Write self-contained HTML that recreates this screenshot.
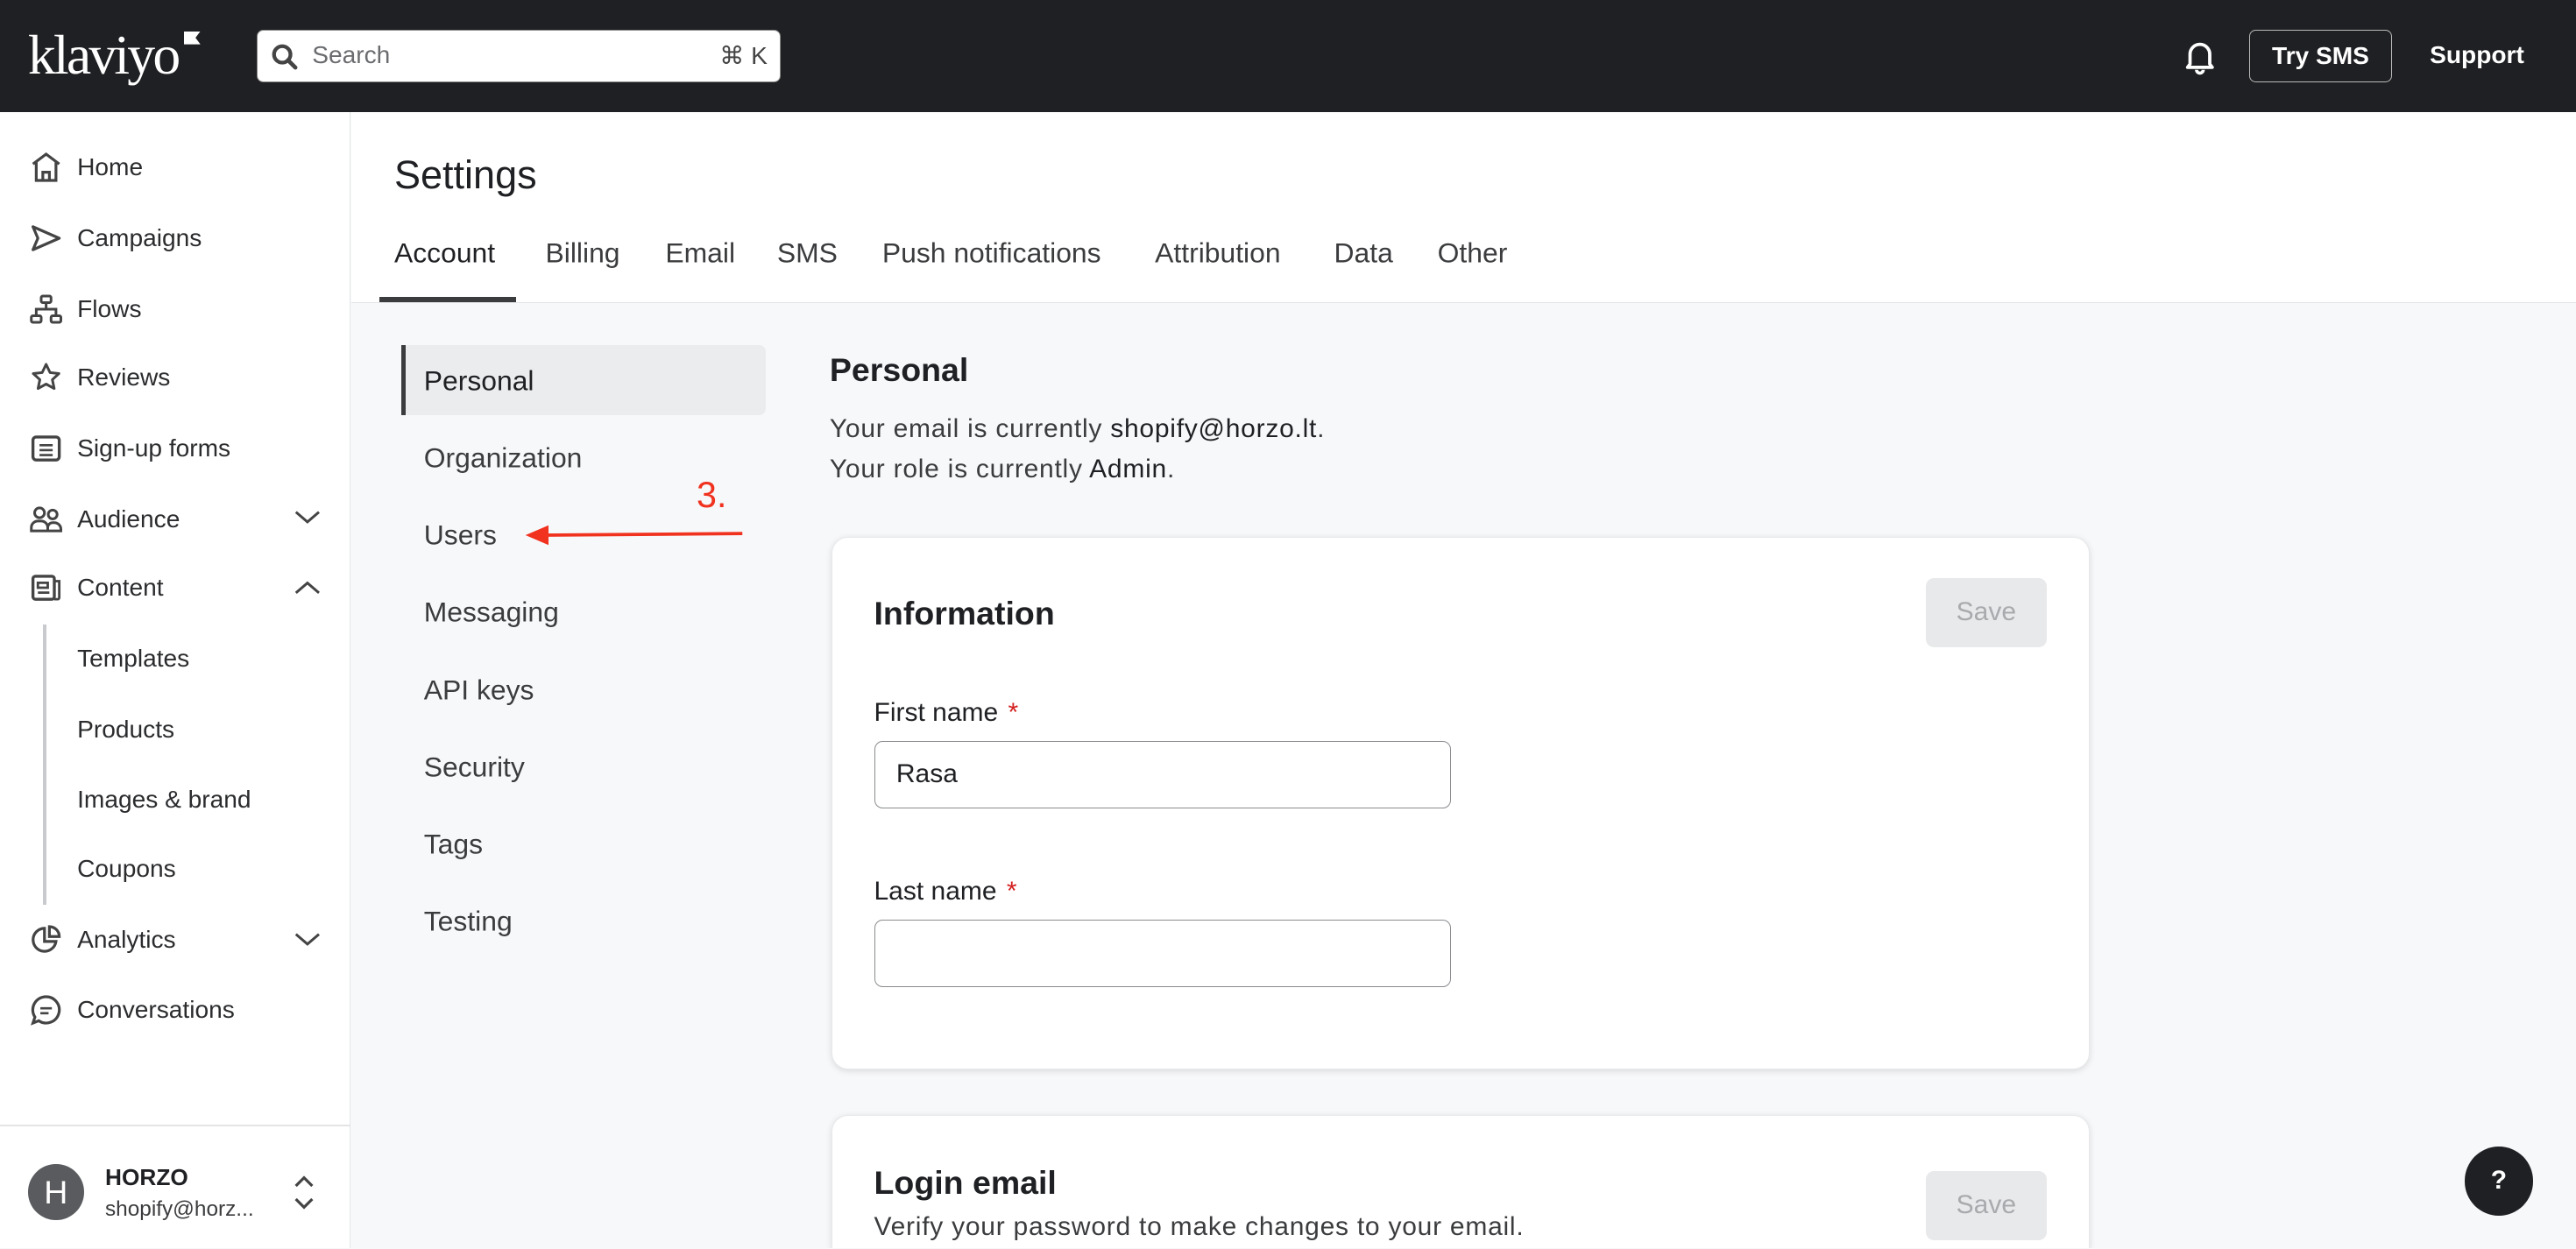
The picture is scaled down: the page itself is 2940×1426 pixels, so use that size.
<!DOCTYPE html>
<html><head><meta charset="utf-8"><style>
html,body{margin:0;padding:0;width:2940px;height:1426px;overflow:hidden;background:#f7f8fa}
#r{zoom:1.875;position:relative;width:1568px;height:760px;overflow:hidden;font-family:"Liberation Sans",sans-serif;color:#1f2023;background:#f7f8fa}
.a{position:absolute}
.hd{left:0;top:0;width:1568px;height:68px;background:#1f2023}
.sb{left:0;top:68px;width:213px;height:692px;background:#fff;border-right:1px solid #e3e4e6}
.ni{position:absolute;left:47px;font-size:15px;color:#2b2c2e;transform:translateY(-50%)}
.ic{position:absolute;left:17px;width:22px;height:22px;transform:translateY(-50%)}
.sub{position:absolute;left:258px;font-size:17px;color:#3b3c3e;transform:translateY(-50%)}
.tab{position:absolute;top:154px;font-size:17px;color:#3b3c3e;transform:translateY(-50%)}
.card{background:#fff;border-radius:10px;box-shadow:0 1px 4px rgba(0,0,0,.12);border:1px solid #e8e9eb}
.save{background:#e8e9eb;color:#a9aaad;border-radius:5px;font-size:16px;display:flex;align-items:center;justify-content:center}
.inp{border:1px solid #8a8b8e;border-radius:5px;background:#fff;font-size:16px;box-sizing:border-box;padding-left:13px;display:flex;align-items:center}
.lbl{font-size:16px;color:#1f2023;transform:translateY(-50%)}
.req{color:#d42020;margin-left:6px}
.p{font-size:16px;color:#3b3c3e;letter-spacing:.4px}
</style></head><body><div id="r">
<div class="a hd"></div>
<div class="a" style="left:17px;top:14px;font-family:'Liberation Serif',serif;font-size:34px;color:#fff;letter-spacing:-1.5px">klaviyo</div>
<div class="a" style="left:112px;top:19px;width:10px;height:8px;background:#fff;clip-path:polygon(0 0,100% 0,70% 50%,100% 100%,0 100%)"></div>
<div class="a" style="left:156px;top:18px;width:319px;height:32px;background:#fff;border-radius:4px;border:1px solid #888;box-sizing:border-box"></div>
<svg class="a" style="left:165px;top:26px" width="17" height="17" viewBox="0 0 17 17"><circle cx="7" cy="7" r="5" fill="none" stroke="#444" stroke-width="2.3"/><path d="M10.5 10.5 15 15" stroke="#444" stroke-width="2.5" stroke-linecap="round"/></svg>
<div class="a" style="left:190px;top:25px;font-size:15px;color:#6b6c6f">Search</div>
<div class="a" style="left:438px;top:25px;font-size:15px;color:#444">⌘ K</div>
<svg class="a" style="left:1329px;top:24px" width="20" height="22" viewBox="0 0 20 22"><path d="M4 15V9a6 6 0 0 1 12 0v6l1.5 2h-15z" fill="none" stroke="#fff" stroke-width="2" stroke-linejoin="round"/><path d="M8 18.5a2 2 0 0 0 4 0" fill="none" stroke="#fff" stroke-width="2"/></svg>
<div class="a" style="left:1369px;top:18px;width:87px;height:32px;border:1px solid #bbb;border-radius:4px;box-sizing:border-box;color:#fff;font-size:15px;font-weight:bold;display:flex;align-items:center;justify-content:center">Try SMS</div>
<div class="a" style="left:1479px;top:25px;color:#fff;font-size:15px;font-weight:bold">Support</div>

<div class="a sb"></div>
<svg class="ic" style="top:102px" viewBox="0 0 22 22" fill="none" stroke="#444" stroke-width="1.7"><path d="M3 9 11 3l8 6M5 8v11h12V8M9 19v-5h4v5"/></svg>
<div class="ni" style="top:102px">Home</div>
<svg class="ic" style="top:145px" viewBox="0 0 22 22" fill="none" stroke="#444" stroke-width="1.7" stroke-linejoin="round"><path d="M3 4l16 7-16 7 3-7z"/></svg>
<div class="ni" style="top:145px">Campaigns</div>
<svg class="ic" style="top:188px" viewBox="0 0 22 22" fill="none" stroke="#444" stroke-width="1.6"><rect x="8" y="3" width="6" height="4" rx="1"/><rect x="2" y="15" width="6" height="4" rx="1"/><rect x="14" y="15" width="6" height="4" rx="1"/><path d="M11 7v4M5 15v-4h12v4"/></svg>
<div class="ni" style="top:188px">Flows</div>
<svg class="ic" style="top:230px" viewBox="0 0 22 22" fill="none" stroke="#444" stroke-width="1.6" stroke-linejoin="round"><path d="M11 3l2.4 5 5.4.6-4 3.7 1.1 5.4L11 15l-4.9 2.7 1.1-5.4-4-3.7 5.4-.6z"/></svg>
<div class="ni" style="top:230px">Reviews</div>
<svg class="ic" style="top:273px" viewBox="0 0 22 22" fill="none" stroke="#444" stroke-width="1.8"><rect x="3" y="4" width="16" height="14" rx="2"/><path d="M7 9h8M7 12h8M7 15h8" stroke-width="1.4"/></svg>
<div class="ni" style="top:273px">Sign-up forms</div>
<svg class="ic" style="top:316px" viewBox="0 0 22 22" fill="none" stroke="#444" stroke-width="1.6"><circle cx="7" cy="7" r="3"/><circle cx="15" cy="8" r="2.7"/><path d="M2 18v-2a4 4 0 0 1 4-4h2a4 4 0 0 1 4 4v2zM12 18v-2a3 3 0 0 1 3-3h1a4 4 0 0 1 4 4v1z"/></svg>
<div class="ni" style="top:316px">Audience</div>
<svg class="ic" style="top:358px" viewBox="0 0 22 22" fill="none" stroke="#444" stroke-width="1.8"><rect x="3" y="4" width="13" height="14" rx="1.5"/><path d="M16 7h3v10a1 1 0 0 1-1 1h-2M6 8h6v3H6zM6 14h7" stroke-width="1.5"/></svg>
<div class="ni" style="top:358px">Content</div>
<svg class="a" style="left:178px;top:309px" width="18" height="12" viewBox="0 0 18 12"><path d="M2 3l7 6 7-6" fill="none" stroke="#444" stroke-width="1.6"/></svg>
<svg class="a" style="left:178px;top:352px" width="18" height="12" viewBox="0 0 18 12"><path d="M2 9l7-6 7 6" fill="none" stroke="#444" stroke-width="1.6"/></svg>
<div class="a" style="left:26px;top:380px;width:2px;height:171px;background:#c9cacd"></div>
<div class="ni" style="top:401px">Templates</div>
<div class="ni" style="top:444px">Products</div>
<div class="ni" style="top:487px">Images &amp; brand</div>
<div class="ni" style="top:529px">Coupons</div>
<svg class="ic" style="top:572px" viewBox="0 0 22 22" fill="none" stroke="#444" stroke-width="1.7"><path d="M10 4a7 7 0 1 0 7 8h-7z"/><path d="M13 3a6 6 0 0 1 6 6h-6z"/></svg>
<div class="ni" style="top:572px">Analytics</div>
<svg class="a" style="left:178px;top:566px" width="18" height="12" viewBox="0 0 18 12"><path d="M2 3l7 6 7-6" fill="none" stroke="#444" stroke-width="1.6"/></svg>
<svg class="ic" style="top:615px" viewBox="0 0 22 22" fill="none" stroke="#444" stroke-width="1.7"><path d="M11 3a8 8 0 1 1-4.5 14.6L3 19l1.2-3.6A8 8 0 0 1 11 3z"/><path d="M7.5 10h7M7.5 13h5" stroke-width="1.4"/></svg>
<div class="ni" style="top:615px">Conversations</div>
<div class="a" style="left:0;top:685px;width:213px;height:1px;background:#e3e4e6"></div>
<div class="a" style="left:17px;top:709px;width:34px;height:34px;border-radius:50%;background:#5a5b5e;color:#fff;font-size:20px;display:flex;align-items:center;justify-content:center">H</div>
<div class="a" style="left:64px;top:709px;font-size:14px;font-weight:bold">HORZO</div>
<div class="a" style="left:64px;top:729px;font-size:13px;color:#3b3c3e">shopify@horz...</div>
<svg class="a" style="left:177px;top:714px" width="16" height="24" viewBox="0 0 16 24"><path d="M3 8l5-5 5 5M3 16l5 5 5-5" fill="none" stroke="#444" stroke-width="1.7"/></svg>

<div class="a" style="left:214px;top:68px;width:1354px;height:116px;background:#fff;border-bottom:1px solid #e3e4e6"></div>
<div class="a" style="left:240px;top:93px;font-size:24px">Settings</div>
<div class="tab" style="left:240px;color:#1f2023">Account</div>
<div class="tab" style="left:332px">Billing</div>
<div class="tab" style="left:405px">Email</div>
<div class="tab" style="left:473px">SMS</div>
<div class="tab" style="left:537px">Push notifications</div>
<div class="tab" style="left:703px">Attribution</div>
<div class="tab" style="left:812px">Data</div>
<div class="tab" style="left:875px">Other</div>
<div class="a" style="left:231px;top:181px;width:83px;height:3px;background:#3b3c3e"></div>

<div class="a" style="left:245px;top:210px;width:221px;height:43px;background:#ebecee;border-radius:4px"></div>
<div class="a" style="left:244px;top:210px;width:3px;height:43px;background:#3b3c3e"></div>
<div class="sub" style="top:232px;color:#1f2023">Personal</div>
<div class="sub" style="top:279px">Organization</div>
<div class="sub" style="top:326px">Users</div>
<div class="sub" style="top:373px">Messaging</div>
<div class="sub" style="top:420px">API keys</div>
<div class="sub" style="top:467px">Security</div>
<div class="sub" style="top:514px">Tags</div>
<div class="sub" style="top:561px">Testing</div>
<div class="a" style="left:424px;top:289px;font-size:22px;color:#f0321e">3.</div>
<svg class="a" style="left:318px;top:318px" width="136" height="16" viewBox="0 0 136 16"><path d="M134 7L12 8" stroke="#f0321e" stroke-width="2"/><path d="M2 8l14-6v12z" fill="#f0321e"/></svg>

<div class="a" style="left:505px;top:214px;font-size:20px;font-weight:600;color:#1f2023">Personal</div>
<div class="a p" style="left:505px;top:252px">Your email is currently <span style="color:#1f2023">shopify@horzo.lt</span>.</div>
<div class="a p" style="left:505px;top:277px">Your role is currently <span style="color:#1f2023">Admin</span>.</div>

<div class="a card" style="left:506px;top:327px;width:766px;height:324px;box-sizing:border-box"></div>
<div class="a" style="left:532px;top:362px;font-size:20px;font-weight:600">Information</div>
<div class="a save" style="left:1172px;top:352px;width:74px;height:42px">Save</div>
<div class="a lbl" style="left:532px;top:434px">First name<span class="req">*</span></div>
<div class="a inp" style="left:532px;top:451px;width:351px;height:41px">Rasa</div>
<div class="a lbl" style="left:532px;top:543px">Last name<span class="req">*</span></div>
<div class="a inp" style="left:532px;top:560px;width:351px;height:41px"></div>

<div class="a card" style="left:506px;top:679px;width:766px;height:82px;box-sizing:border-box;border-bottom:none;border-radius:10px 10px 0 0"></div>
<div class="a" style="left:532px;top:709px;font-size:20px;font-weight:600">Login email</div>
<div class="a p" style="left:532px;top:738px">Verify your password to make changes to your email.</div>
<div class="a save" style="left:1172px;top:713px;width:74px;height:42px">Save</div>

<div class="a" style="left:1500px;top:698px;width:42px;height:42px;border-radius:50%;background:#1f2023;color:#fff;font-size:16px;font-weight:bold;display:flex;align-items:center;justify-content:center">?</div>
</div></body></html>
